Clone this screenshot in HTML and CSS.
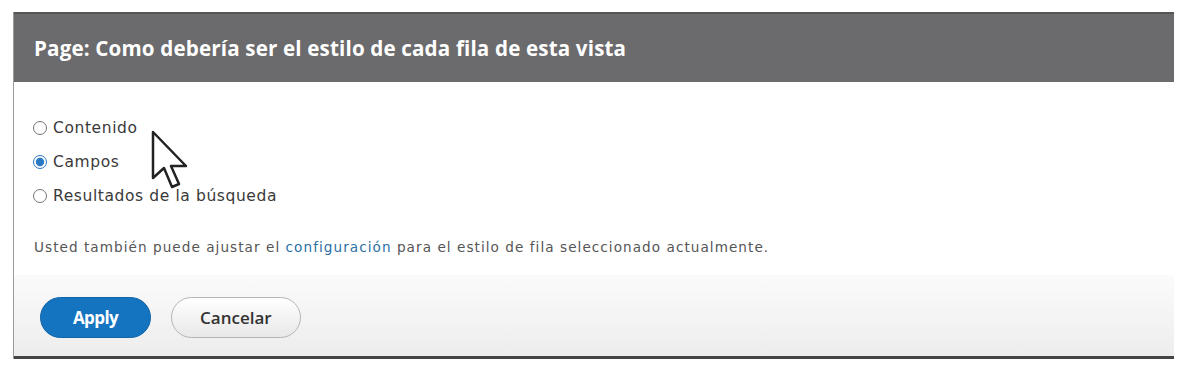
FILE: index.html
```html
<!DOCTYPE html>
<html lang="es">
<head>
    <meta charset="UTF-8">
    <title>Page: Como debería ser el estilo de cada fila de esta vista</title>
    <link rel="stylesheet" href="styles.css">
</head>
<body>
    <div class="dialog">
        <div class="dialog-title">Page: Como debería ser el estilo de cada fila de esta vista</div>

        <div class="dialog-content">
            <div class="radios">
                <label class="radio"><input type="radio" name="row_plugin"> Contenido</label>
                <label class="radio"><input type="radio" name="row_plugin" checked> Campos</label>
                <label class="radio"><input type="radio" name="row_plugin"> Resultados de la búsqueda</label>
            </div>
            <p class="description">Usted también puede ajustar el <a href="#">configuración</a> para el estilo de fila seleccionado actualmente.</p>
        </div>

        <div class="dialog-buttons">
            <button class="button button-primary">Apply</button>
            <button class="button">Cancelar</button>
        </div>

        <!-- mouse pointer from the recording -->
        <svg class="pointer" width="44" height="64" viewBox="0 0 44 64">
            <path d="M3 3 L3 49 L14 39 L22 58 L29 55 L21 37 L36 37 Z" fill="#fff" stroke="#222" stroke-width="2.5" stroke-linejoin="round"/>
        </svg>
    </div>
</body>
</html>
```

FILE: styles.css
```css
body {
    margin: 0;
    background: #fff;
    font-family: "DejaVu Sans", sans-serif;
    color: #333;
}

.dialog {
    position: relative;
    margin: 12px 0 0 13px;
    width: 1161px;
    border-left: 1px solid #9a9a9a;
    box-sizing: border-box;
}

.dialog-title {
    height: 70px;
    line-height: 68px;
    padding-left: 20px;
    background: #6b6a6c;
    border-top: 2px solid #555;
    box-sizing: border-box;
    color: #fff;
    font-family: "Open Sans", sans-serif;
    font-weight: bold;
    font-size: 20.6px;
    letter-spacing: 0.15px;
}

.dialog-content {
    height: 193px;
    padding: 36px 0 0 19px;
    box-sizing: border-box;
}

.radios {
    display: flex;
    flex-direction: column;
    gap: 14px;
}

.radio {
    display: flex;
    align-items: center;
    height: 20px;
    font-size: 15.5px;
    letter-spacing: 0.6px;
    color: #3a3a3a;
}

.radio input {
    width: 14px;
    height: 14px;
    margin: 0 6px 0 0;
    accent-color: #2a78c4;
}

.description {
    margin: 33px 0 0 1px;
    font-size: 13.6px;
    letter-spacing: 1.05px;
    color: #555;
}

.description a {
    color: #2a6fa6;
    text-decoration: none;
}

.dialog-buttons {
    display: flex;
    gap: 20px;
    height: 84px;
    padding: 22px 0 0 26px;
    box-sizing: border-box;
    background: linear-gradient(#fcfbfb, #eeeded);
    border-bottom: 3px solid #444;
}

.button {
    height: 41px;
    padding: 0 28px;
    border-radius: 21px;
    border: 1px solid #b5b5b5;
    background: linear-gradient(#fff, #e8e8e8);
    color: #333;
    font-family: "Open Sans", sans-serif;
    font-size: 17px;
    font-weight: 600;
}

.button-primary {
    width: 111px;
    border-color: #1064a8;
    background: #1474c0;
    color: #fff;
    font-weight: bold;
    letter-spacing: -0.6px;
}

.pointer {
    position: absolute;
    left: 136px;
    top: 117px;
}
```
